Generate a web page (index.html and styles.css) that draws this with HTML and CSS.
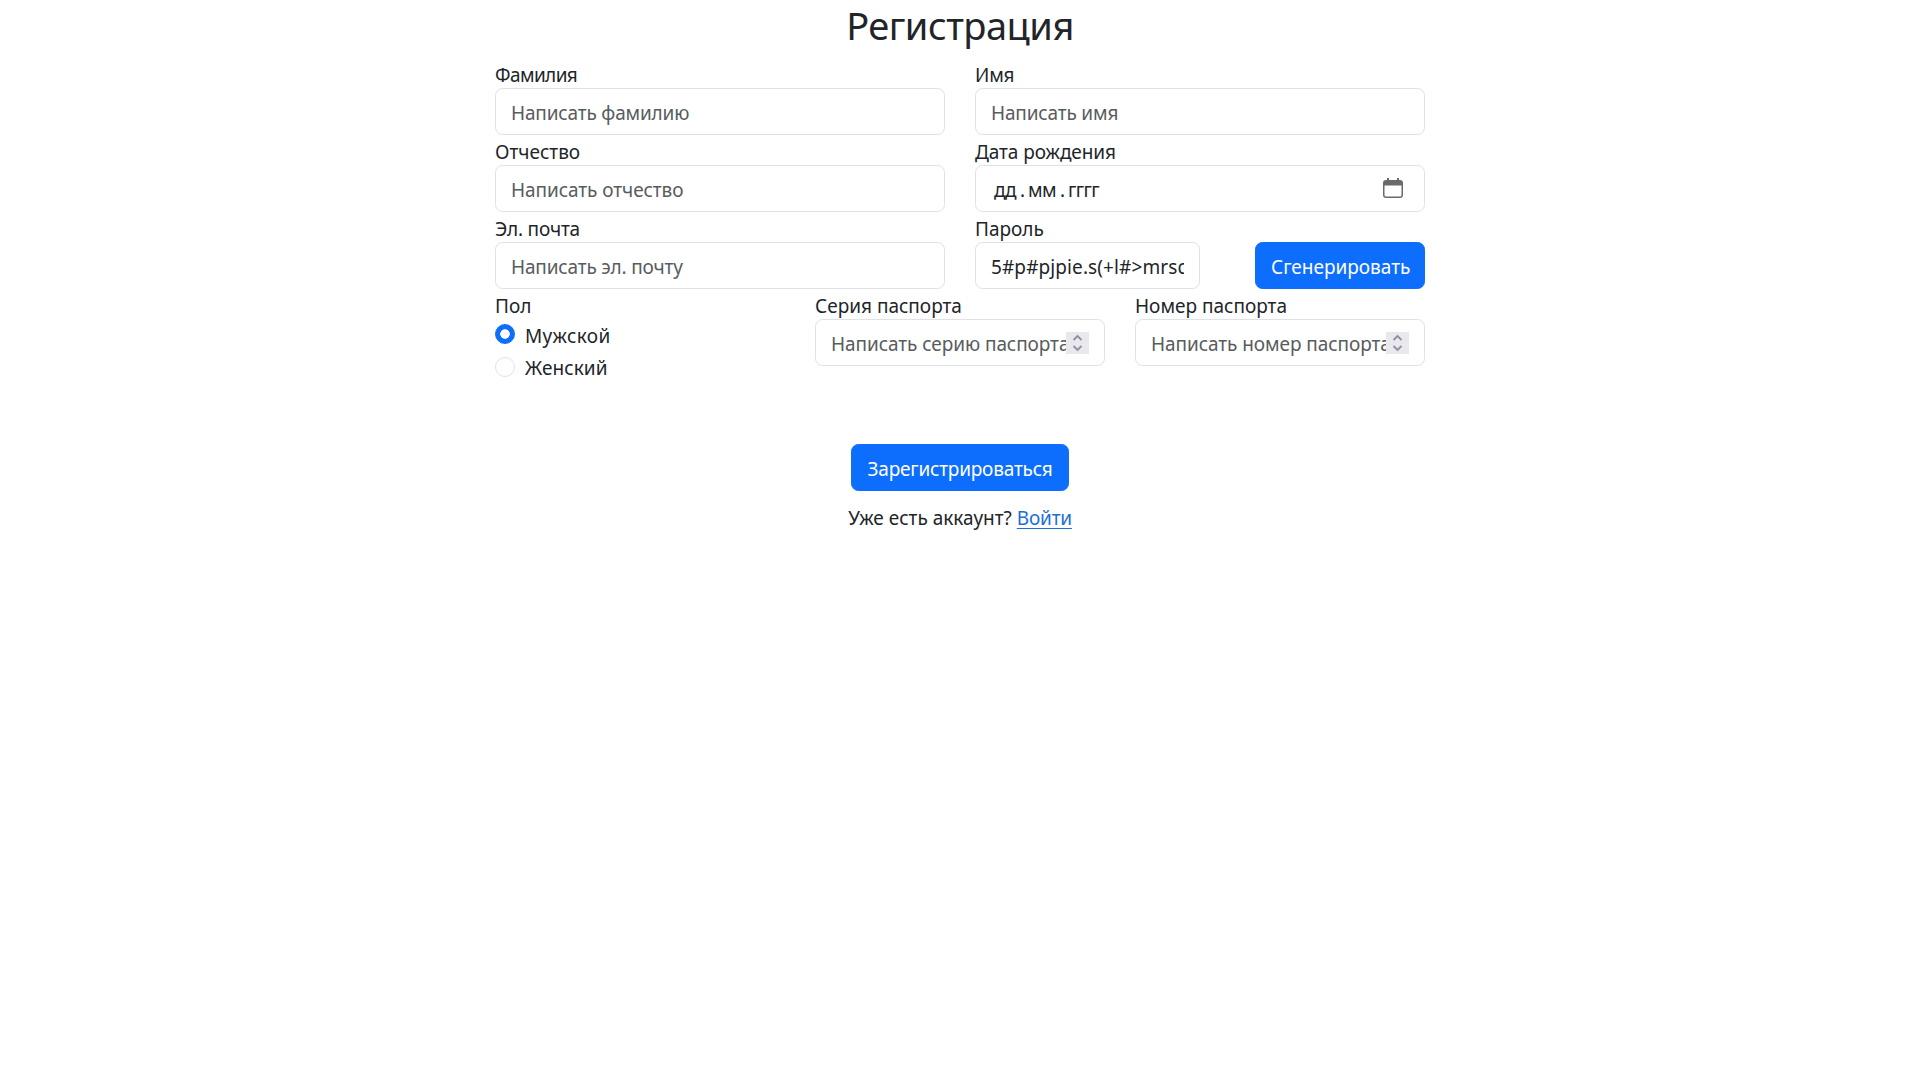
FILE: index.html
```
<!DOCTYPE html>
<html lang="ru">
<head>
  <meta charset="utf-8">
  <title>Регистрация</title>
  <link rel="stylesheet" href="styles.css">
</head>
<body>
  <main class="page">
    <h2 class="title">Регистрация</h2>
    <form class="form">
      <div class="row halves">
        <div class="col">
          <label class="label snug" for="surname">Фамилия</label>
          <input class="control tight" id="surname" type="text" placeholder="Написать фамилию">
        </div>
        <div class="col">
          <label class="label tight" for="name">Имя</label>
          <input class="control tight" id="name" type="text" placeholder="Написать имя">
        </div>
        <div class="col">
          <label class="label" for="patronymic">Отчество</label>
          <input class="control slim" id="patronymic" type="text" placeholder="Написать отчество">
        </div>
        <div class="col">
          <span class="label slim">Дата рождения</span>
          <div class="control date">
            <span class="date-parts"><span class="day">дд</span><span class="dot">.</span><span class="month">мм</span><span class="dot">.</span><span class="year">гггг</span></span>
            <svg class="calendar" viewBox="0 0 20 20" width="20" height="20" aria-hidden="true">
              <path fill="#6a6a6a" fill-rule="evenodd" d="M4 0h2v2h8V0h2v2h1A3 3 0 0 1 20 5V17a3 3 0 0 1-3 3H3a3 3 0 0 1-3-3V5A3 3 0 0 1 3 2h1zM1.500 7.500V17A1.500 1.500 0 0 0 3 18.500h14a1.500 1.500 0 0 0 1.500-1.500V7.500z"/>
            </svg>
          </div>
        </div>
        <div class="col">
          <label class="label tight" for="email">Эл. почта</label>
          <input class="control tight" id="email" type="email" placeholder="Написать эл. почту">
        </div>
        <div class="col">
          <label class="label" for="password">Пароль</label>
          <div class="password-row">
            <input class="control password" id="password" type="text" value="5#p#pjpie.s(+l#&gt;mrsc">
            <button class="button generate" type="button">Сгенерировать</button>
          </div>
        </div>
      </div>
      <div class="row thirds">
        <div class="col">
          <span class="label">Пол</span>
          <label class="check"><input class="radio" type="radio" name="sex" checked><span class="check-text wide">Мужской</span></label>
          <label class="check"><input class="radio" type="radio" name="sex"><span class="loose">Женский</span></label>
        </div>
        <div class="col">
          <label class="label" for="series">Серия паспорта</label>
          <div class="control number">
            <input class="number-input slim" id="series" type="text" placeholder="Написать серию паспорта">
            <svg class="spinner" viewBox="0 0 23 22" width="23" height="22" aria-hidden="true"><path d="M7.500 8l4-4 4 4M7.500 14l4 4 4-4"/></svg>
          </div>
        </div>
        <div class="col">
          <label class="label" for="number">Номер паспорта</label>
          <div class="control number">
            <input class="number-input slim" id="number" type="text" placeholder="Написать номер паспорта">
            <svg class="spinner" viewBox="0 0 23 22" width="23" height="22" aria-hidden="true"><path d="M7.500 8l4-4 4 4M7.500 14l4 4 4-4"/></svg>
          </div>
        </div>
      </div>
      <button class="button submit" type="button">Зарегистрироваться</button>
      <p class="hint"><span>Уже есть аккаунт?</span> <a class="link" href="#">Войти</a></p>
    </form>
  </main>
</body>
</html>
```
FILE: styles.css
```
* { box-sizing: border-box; }
body {
  margin: 0;
  background: #fff;
  color: #212529;
  font: 400 19px/30px "Noto Sans", "Open Sans", sans-serif;
}
.page { width: 930px; margin: 0 auto; }
.title {
  margin: 0 0 10px;
  padding-top: 2px;
  font-size: 38px;
  font-weight: 400;
  line-height: 46px;
  height: 48px;
  letter-spacing: -0.5px;
  text-align: center;
}
.form { display: flex; flex-direction: column; }
.row { display: grid; column-gap: 30px; }
.halves { grid-template-columns: 1fr 1fr; }
.thirds { grid-template-columns: 290px 290px 290px; }
.col { display: flex; flex-direction: column; min-width: 0; }
.label { display: block; height: 30px; padding-top: 2px; }
.control {
  width: 100%;
  height: 47px;
  padding: 2px 15px 0;
  border: 1px solid #dee2e6;
  border-radius: 7.5px;
  background: #fff;
  color: #212529;
  font: inherit;
  outline: 0;
}
.control::placeholder, .number-input::placeholder { color: #585c5f; opacity: 1; }
.date { display: flex; align-items: center; justify-content: space-between; padding: 0 21px 0 18px; }
.date-parts { display: flex; padding-top: 2px; }
.day { width: 24px; letter-spacing: -0.8px; }
.month { width: 30px; letter-spacing: -0.6px; }
.year { letter-spacing: -0.6px; }
.dot { width: 10px; padding-left: 2px; }
.calendar { margin-bottom: 1px; }
.password-row { display: flex; justify-content: space-between; }
.password { width: 225px; letter-spacing: 0.1px; }
.button {
  height: 47px;
  padding: 2px 15px 0;
  border: 1px solid #0d6efd;
  border-radius: 7.5px;
  background: #0d6efd;
  color: #fff;
  font: inherit;
  white-space: nowrap;
}
.generate { width: 170px; padding-right: 17px; }
.check { display: flex; gap: 10px; height: 30px; margin-bottom: 2.5px; }
.check-text { padding-top: 2px; }
.radio {
  appearance: none;
  width: 20px;
  height: 20px;
  margin: 5px 0 0;
  border: 1px solid #dee2e6;
  border-radius: 50%;
  background: #fff;
}
.radio:checked {
  border-color: #0d6efd;
  background: radial-gradient(circle, #fff 4.4px, #0d6efd 5.1px);
  background-origin: border-box;
}
.number { display: flex; align-items: center; padding: 0 15px; }
.number-input {
  flex: 1;
  min-width: 0;
  height: 30px;
  padding: 2px 0 0;
  border: 0;
  background: none;
  color: inherit;
  font: inherit;
  outline: 0;
}
.spinner { flex: none; background: #e9e9ed; fill: none; stroke: #8f8f9d; stroke-width: 1.8; }
.submit { align-self: center; width: 218px; margin-top: 60px; letter-spacing: -0.2px; }
.hint { margin: 12px 0 0; text-align: center; }
.link { color: #1c6fd6; letter-spacing: -0.2px; text-underline-offset: 3px; }
.snug { letter-spacing: -0.6px; }
.tight { letter-spacing: -0.17px; }
.slim { letter-spacing: -0.07px; }
.loose { letter-spacing: 0.08px; padding-top: 1px; }
.wide { letter-spacing: 0.35px; }
```
